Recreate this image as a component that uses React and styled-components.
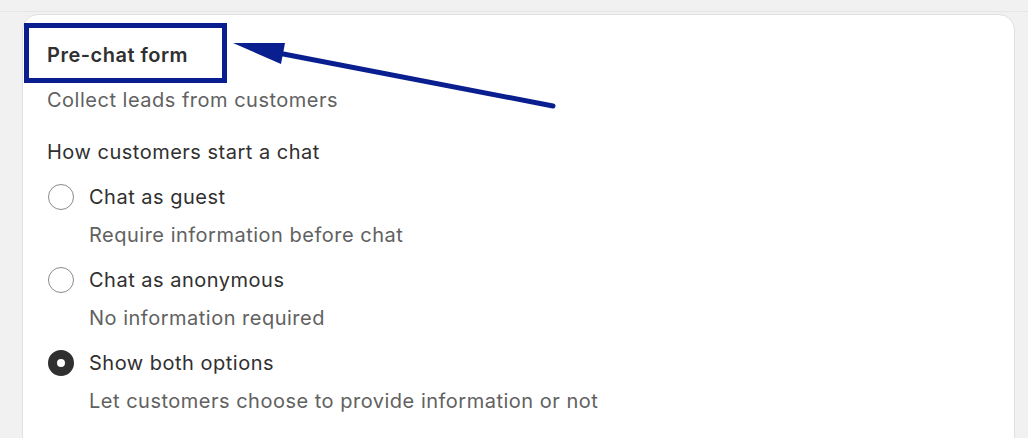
import styled, { createGlobalStyle } from 'styled-components';

const GlobalStyle = createGlobalStyle`
  body {
    margin: 0;
    background: #f1f1f1;
    font-family: Inter, "Noto Sans", sans-serif;
    -webkit-font-smoothing: antialiased;
  }
`;

const options = [
  { label: 'Chat as guest', help: 'Require information before chat', checked: false },
  { label: 'Chat as anonymous', help: 'No information required', checked: false },
  { label: 'Show both options', help: 'Let customers choose to provide information or not', checked: true },
];

function App() {
  return (
    <Page>
      <GlobalStyle />
      <TopStrip />
      <Card>
        <Title>Pre-chat form</Title>
        <Subtitle>Collect leads from customers</Subtitle>
        <Question>How customers start a chat</Question>
        <OptionList>
          {options.map((opt) => (
            <Option key={opt.label}>
              <OptionRow>
                <Radio checked={opt.checked} />
                <OptionLabel>{opt.label}</OptionLabel>
              </OptionRow>
              <OptionHelp>{opt.help}</OptionHelp>
            </Option>
          ))}
        </OptionList>
      </Card>
      <Highlight />
      <Arrow width="340" height="90" viewBox="0 0 340 90">
        <line x1="40" y1="12" x2="320" y2="66" stroke="#0a1f8f" strokeWidth="5" strokeLinecap="round" />
        <polygon points="0,3 52,3 48,24" fill="#0a1f8f" />
      </Arrow>
    </Page>
  );
}

const Page = styled.div`
  position: relative;
  height: 438px;
  overflow: hidden;
`;

const TopStrip = styled.div`
  height: 11px;
  border-bottom: 1px solid #e6e6e6;
`;

const Card = styled.div`
  margin: 2px 0 0 22px;
  width: 993px;
  height: 460px;
  box-sizing: border-box;
  background: #fff;
  border: 1px solid #e0e0e0;
  border-radius: 16px 16px 0 0;
  padding: 27px 24px 0;
  font-size: 20px;
  letter-spacing: 0.5px;
  line-height: 26px;
`;

const Title = styled.div`
  font-weight: 600;
  color: #303030;
`;

const Subtitle = styled.div`
  margin-top: 19px;
  color: #616161;
`;

const Question = styled.div`
  margin-top: 26px;
  color: #303030;
`;

const OptionList = styled.div`
  margin-top: 19px;
  display: flex;
  flex-direction: column;
  gap: 19px;
`;

const Option = styled.div`
  display: flex;
  flex-direction: column;
  gap: 12px;
`;

const OptionRow = styled.div`
  display: flex;
  align-items: center;
  gap: 15px;
`;

const Radio = styled.span`
  width: 26px;
  height: 26px;
  margin-left: 1px;
  box-sizing: border-box;
  border-radius: 50%;
  flex: none;
  background: #fff;
  border: ${(p) => (p.checked ? '9px solid #303030' : '1px solid #8a8a8a')};
`;

const OptionLabel = styled.span`
  color: #303030;
`;

const OptionHelp = styled.div`
  padding-left: 42px;
  color: #616161;
`;

const Highlight = styled.div`
  position: absolute;
  left: 24px;
  top: 23px;
  width: 203px;
  height: 60px;
  box-sizing: border-box;
  border: 5px solid #0a1f8f;
`;

const Arrow = styled.svg`
  position: absolute;
  left: 233px;
  top: 40px;
  overflow: visible;
`;

export default App;
